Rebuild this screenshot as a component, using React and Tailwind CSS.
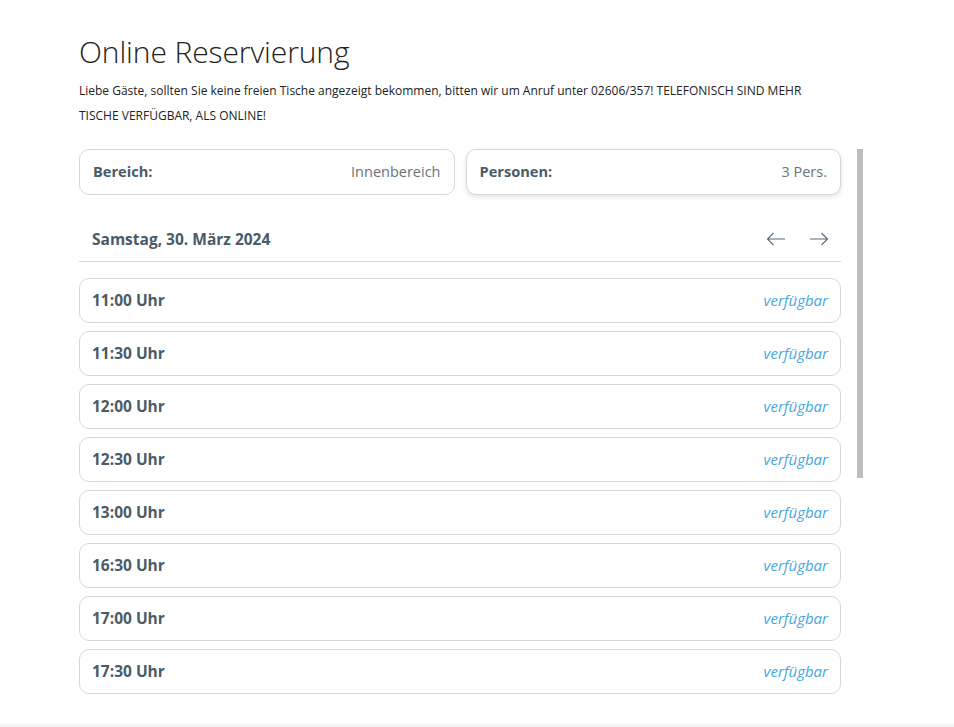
const slots = ['11:00', '11:30', '12:00', '12:30', '13:00', '16:30', '17:00', '17:30'];

const font = { fontFamily: '"Open Sans", "Noto Sans", sans-serif' };

function InfoCard({ label, value, raised }) {
  return (
    <div
      className={`flex-1 h-[46px] flex items-center justify-between px-[13px] rounded-[10px] border border-[#d4d8dd] bg-white ${
        raised ? 'shadow-[0_2px_5px_rgba(0,0,0,0.12)]' : ''
      }`}
    >
      <span className="text-[14.6px] font-bold text-[#4a5b68]">{label}</span>
      <span className="text-[14.5px] text-[#6a737b]">{value}</span>
    </div>
  );
}

function Slot({ time }) {
  return (
    <div className="h-[45px] flex items-center justify-between pl-[12px] pr-[12px] rounded-[10px] border border-[#d4d8dd] bg-white">
      <span className="text-[15.5px] font-bold text-[#4a5b68]">{time} Uhr</span>
      <span className="text-[15px] italic text-[#45a8e0]">verfügbar</span>
    </div>
  );
}

function Arrow({ dir }) {
  return (
    <svg width="20" height="14" viewBox="0 0 20 14" fill="none" stroke="currentColor" strokeWidth="1.1">
      {dir === 'left' ? (
        <path d="M19 7H1.5M7.5 1L1.5 7l6 6" />
      ) : (
        <path d="M1 7h17.5M12.5 1l6 6-6 6" />
      )}
    </svg>
  );
}

export default function App() {
  return (
    <div className="h-[727px] flex flex-col bg-white" style={font}>
      <div className="flex-1 pl-[79px] pt-[30px]">
        <h1 className="text-[30px] font-light text-[#222] leading-[44px] tracking-[-0.1px]">Online Reservierung</h1>
        <p className="mt-[4px] w-[762px] text-[12px] leading-[25px] text-[#222]">
          Liebe Gäste, sollten Sie keine freien Tische angezeigt bekommen, bitten wir um Anruf unter 02606/357! TELEFONISCH SIND MEHR TISCHE VERFÜGBAR, ALS ONLINE!
        </p>

        <div className="mt-[21px] flex gap-[16px]">
          <div className="w-[762px] flex flex-col">
            <div className="flex gap-[11px]">
              <InfoCard label="Bereich:" value="Innenbereich" />
              <InfoCard label="Personen:" value="3 Pers." raised />
            </div>

            <div className="mt-[21px] h-[46px] flex items-center justify-between pl-[13px] pr-[12px] border-b border-[#d4d8dd]">
              <span className="text-[15.5px] font-bold text-[#4a5b68] pt-[2px]">Samstag, 30. März 2024</span>
              <div className="flex items-center gap-[23px] text-[#5b6b77]">
                <Arrow dir="left" />
                <Arrow dir="right" />
              </div>
            </div>

            <div className="mt-[16px] flex flex-col gap-[8px]">
              {slots.map((t) => (
                <Slot key={t} time={t} />
              ))}
            </div>
          </div>
          <div className="w-[6px] h-[329px] bg-[#bdbdbd]" />
        </div>
      </div>
      <div className="h-[3px] bg-[#f5f5f5]" />
    </div>
  );
}
